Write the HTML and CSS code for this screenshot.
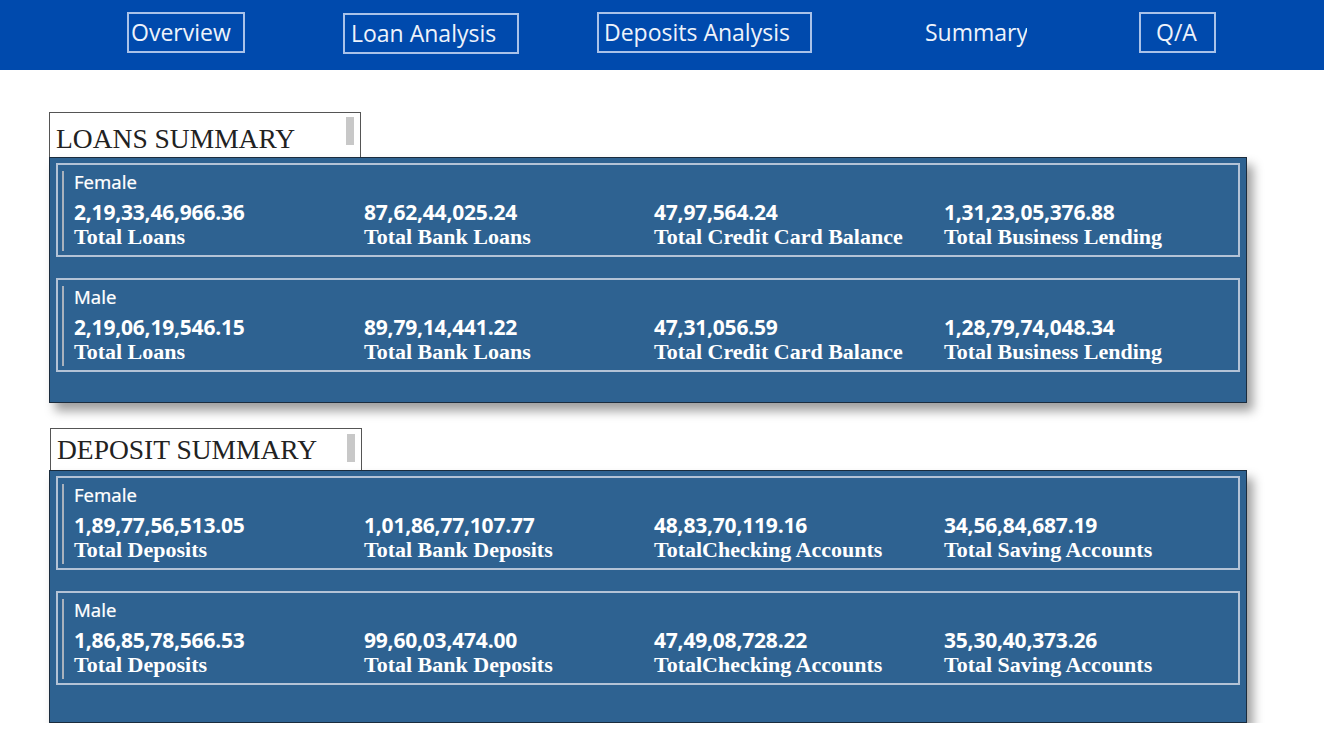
FILE: index.html
```html
<!DOCTYPE html>
<html lang="en">
<head>
<meta charset="utf-8">
<title>Summary</title>
<link rel="stylesheet" href="styles.css">
</head>
<body>
<nav class="nav">
  <a class="nav-btn nav-overview">Overview</a>
  <a class="nav-btn nav-loan">Loan Analysis</a>
  <a class="nav-btn nav-deposits">Deposits Analysis</a>
  <a class="nav-text nav-summary">Summary</a>
  <a class="nav-btn nav-qa">Q/A</a>
</nav>

<main class="page">
  <section class="section section-loans">
    <div class="title-box"><span class="title">LOANS SUMMARY</span><span class="thumb"></span></div>
    <div class="panel">
      <div class="card">
        <div class="card-inner">
          <div class="group">Female</div>
          <div class="grid">
            <div class="kpi"><div class="val">2,19,33,46,966.36</div><div class="lbl">Total Loans</div></div>
            <div class="kpi"><div class="val">87,62,44,025.24</div><div class="lbl">Total Bank Loans</div></div>
            <div class="kpi"><div class="val">47,97,564.24</div><div class="lbl">Total Credit Card Balance</div></div>
            <div class="kpi"><div class="val">1,31,23,05,376.88</div><div class="lbl">Total Business Lending</div></div>
          </div>
        </div>
      </div>
      <div class="card">
        <div class="card-inner">
          <div class="group">Male</div>
          <div class="grid">
            <div class="kpi"><div class="val">2,19,06,19,546.15</div><div class="lbl">Total Loans</div></div>
            <div class="kpi"><div class="val">89,79,14,441.22</div><div class="lbl">Total Bank Loans</div></div>
            <div class="kpi"><div class="val">47,31,056.59</div><div class="lbl">Total Credit Card Balance</div></div>
            <div class="kpi"><div class="val">1,28,79,74,048.34</div><div class="lbl">Total Business Lending</div></div>
          </div>
        </div>
      </div>
    </div>
  </section>

  <section class="section section-deposits">
    <div class="title-box title-box-dep"><span class="title">DEPOSIT SUMMARY</span><span class="thumb"></span></div>
    <div class="panel panel-dep">
      <div class="card">
        <div class="card-inner">
          <div class="group">Female</div>
          <div class="grid">
            <div class="kpi"><div class="val">1,89,77,56,513.05</div><div class="lbl">Total Deposits</div></div>
            <div class="kpi"><div class="val">1,01,86,77,107.77</div><div class="lbl">Total Bank Deposits</div></div>
            <div class="kpi"><div class="val">48,83,70,119.16</div><div class="lbl">TotalChecking Accounts</div></div>
            <div class="kpi"><div class="val">34,56,84,687.19</div><div class="lbl">Total Saving Accounts</div></div>
          </div>
        </div>
      </div>
      <div class="card">
        <div class="card-inner">
          <div class="group">Male</div>
          <div class="grid">
            <div class="kpi"><div class="val">1,86,85,78,566.53</div><div class="lbl">Total Deposits</div></div>
            <div class="kpi"><div class="val">99,60,03,474.00</div><div class="lbl">Total Bank Deposits</div></div>
            <div class="kpi"><div class="val">47,49,08,728.22</div><div class="lbl">TotalChecking Accounts</div></div>
            <div class="kpi"><div class="val">35,30,40,373.26</div><div class="lbl">Total Saving Accounts</div></div>
          </div>
        </div>
      </div>
    </div>
  </section>
</main>
</body>
</html>
```

FILE: styles.css
```css
* { box-sizing: border-box; }

body {
  margin: 0;
  background: #ffffff;
  font-family: "Open Sans", "Noto Sans", sans-serif;
}

.nav {
  height: 70px;
  background: #004aad;
  display: flex;
  align-items: flex-start;
  padding: 12px 0 0 127px;
}

.nav-btn, .nav-text {
  display: block;
  height: 41px;
  color: #eef3fb;
  font-size: 23px;
  line-height: 37px;
  white-space: nowrap;
  overflow: hidden;
}

.nav-btn {
  border: 2px solid #a9c2e9;
}

.nav-overview { width: 118px; padding-left: 2px; }
.nav-loan { width: 176px; padding-left: 6px; margin-left: 98px; margin-top: 1px; }
.nav-deposits { width: 215px; padding-left: 5px; margin-left: 78px; }
.nav-summary { width: 102px; margin-left: 113px; padding-top: 2px; }
.nav-qa { width: 77px; padding-left: 15px; margin-left: 112px; }

.page {
  padding: 42px 0 0 49px;
}

.section-deposits {
  margin-top: 25px;
}

.title-box {
  width: 312px;
  height: 45px;
  border: 1px solid #555555;
  border-bottom: none;
  background: #ffffff;
  display: flex;
  align-items: flex-start;
  justify-content: space-between;
  padding: 4px 6px 0 6px;
}

.title-box-dep {
  height: 42px;
  margin-left: 1px;
  padding-top: 5px;
}

.title {
  font-family: "Liberation Serif", "Times New Roman", serif;
  font-size: 27.5px;
  line-height: 38px;
  color: #222222;
  padding-top: 3px;
}

.title-box-dep .title { padding-top: 0; margin-top: -3px; }

.thumb {
  width: 8px;
  height: 28px;
  background: #c8c8c8;
}

.panel {
  width: 1198px;
  height: 246px;
  background: #2e6291;
  border: 1px solid #1b2c3d;
  box-shadow: 6px 8px 10px rgba(0, 0, 0, 0.38);
  padding: 5px 6px 0 6px;
  display: flex;
  flex-direction: column;
  gap: 21px;
}

.panel-dep {
  height: 253px;
}

.card {
  height: 94px;
  border: 2px solid #b4c3d6;
  padding: 6px 0 4px 4px;
}

.card-inner {
  height: 100%;
  border-left: 2px solid #a9b2bd;
  padding-left: 10px;
}

.group {
  color: #ffffff;
  font-family: "Noto Sans", "Open Sans", sans-serif;
  font-size: 18.5px;
  line-height: 22px;
  -webkit-text-stroke: 0.2px #ffffff;
}

.grid {
  display: grid;
  grid-template-columns: repeat(4, 290px);
  margin-top: 8px;
}

.val {
  color: #ffffff;
  font-family: "Open Sans", "Noto Sans", sans-serif;
  font-weight: 700;
  font-size: 21px;
  line-height: 22px;
  letter-spacing: -0.2px;
}

.lbl {
  color: #ffffff;
  font-family: "Liberation Serif", "Times New Roman", serif;
  font-weight: 700;
  font-size: 22px;
  line-height: 27px;
}
```
